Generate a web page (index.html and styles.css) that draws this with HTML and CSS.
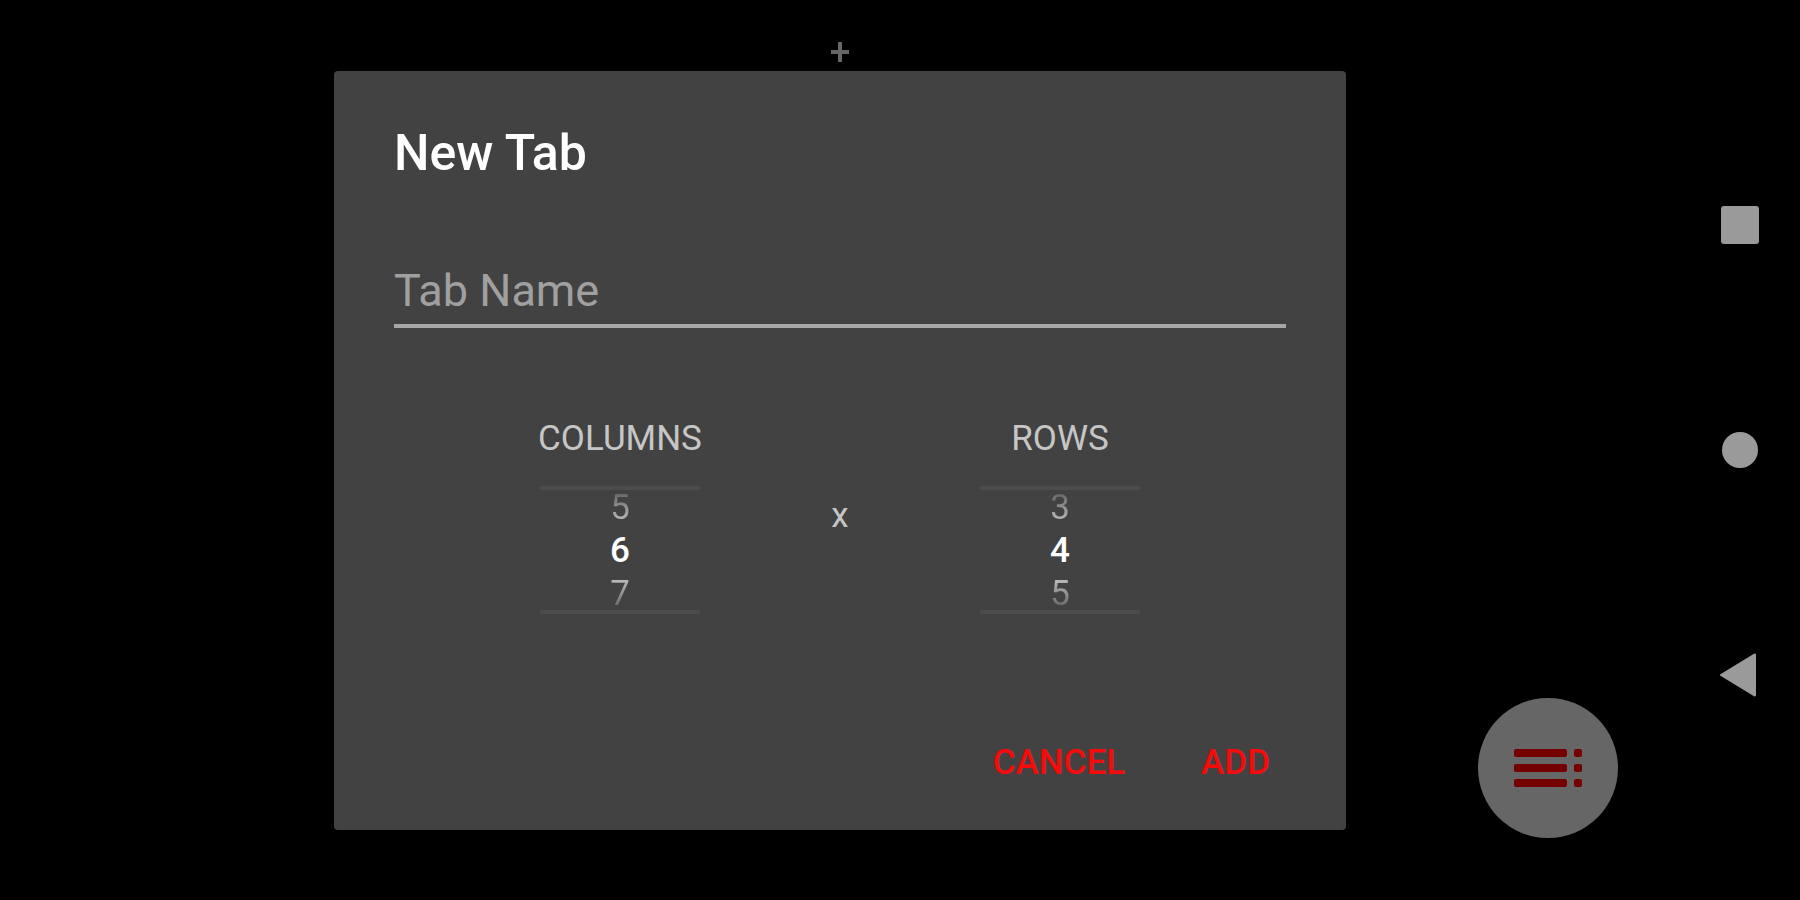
FILE: index.html
```html
<!DOCTYPE html>
<html lang="en">
<head>
    <meta charset="UTF-8">
    <meta name="viewport" content="width=device-width, initial-scale=1.0">
    <title>New Tab</title>
    <link rel="stylesheet" href="styles.css">
</head>
<body>
    <main class="app">
        <div class="tab-bar">
            <button class="add-tab" type="button" aria-label="Add tab">
                <svg width="20" height="20" viewBox="0 0 20 20"><path d="M10 0v20M1 10h18" stroke="#666" stroke-width="4"/></svg>
            </button>
        </div>

        <form class="dialog" role="dialog" aria-labelledby="dialog-title">
            <h1 class="dialog-title" id="dialog-title">New Tab</h1>
            <input class="tab-name" type="text" placeholder="Tab Name" aria-label="Tab Name">

            <div class="grid-size">
                <div class="picker" role="radiogroup" aria-labelledby="columns-label">
                    <div class="picker-label" id="columns-label">COLUMNS</div>
                    <div class="wheel">
                        <label class="value"><input type="radio" name="columns" value="5">5</label>
                        <label class="value"><input type="radio" name="columns" value="6" checked>6</label>
                        <label class="value"><input type="radio" name="columns" value="7">7</label>
                    </div>
                </div>
                <div class="times">x</div>
                <div class="picker" role="radiogroup" aria-labelledby="rows-label">
                    <div class="picker-label" id="rows-label">ROWS</div>
                    <div class="wheel">
                        <label class="value"><input type="radio" name="rows" value="3">3</label>
                        <label class="value"><input type="radio" name="rows" value="4" checked>4</label>
                        <label class="value"><input type="radio" name="rows" value="5">5</label>
                    </div>
                </div>
            </div>

            <div class="actions">
                <button class="action" type="button">CANCEL</button>
                <button class="action" type="button">ADD</button>
            </div>
        </form>

        <button class="fab" type="button" aria-label="Menu">
            <svg width="68" height="38" viewBox="0 0 68 38" fill="#750000">
                <rect x="0" y="0" width="53" height="8" rx="2"/>
                <rect x="0" y="15" width="53" height="8" rx="2"/>
                <rect x="0" y="30" width="53" height="8" rx="2"/>
                <rect x="60" y="0" width="8" height="8" rx="2"/>
                <rect x="60" y="15" width="8" height="8" rx="2"/>
                <rect x="60" y="30" width="8" height="8" rx="2"/>
            </svg>
        </button>
    </main>

    <!-- system navigation -->
    <nav class="nav-bar">
        <button class="nav-btn" type="button" aria-label="Recent apps">
            <svg width="40" height="44" viewBox="0 0 40 44"><rect x="1" y="3" width="38" height="38" rx="3"/></svg>
        </button>
        <button class="nav-btn" type="button" aria-label="Home">
            <svg width="40" height="44" viewBox="0 0 40 44"><circle cx="20" cy="22" r="18"/></svg>
        </button>
        <button class="nav-btn" type="button" aria-label="Back">
            <svg width="40" height="44" viewBox="0 0 40 44"><path d="M0 21.5 34 .7Q36 0 36 2v40q0 2-2 1.3L0 22.5Q-1 22 0 21.5z"/></svg>
        </button>
    </nav>
</body>
</html>
```
FILE: styles.css
```css
* {
    box-sizing: border-box;
}

body {
    display: flex;
    min-height: 100vh;
    margin: 0;
    background: #000;
    color: #fff;
    font-family: Roboto, sans-serif;
}

button {
    padding: 0;
    border: none;
    background: none;
    font-family: inherit;
    cursor: pointer;
}

svg {
    display: block;
}

.app {
    position: relative;
    flex: 1;
    display: flex;
    align-items: center;
    justify-content: center;
}

.tab-bar {
    position: absolute;
    top: 0;
    left: 0;
    right: 0;
    display: flex;
    justify-content: center;
    padding-top: 42px;
}

.dialog {
    position: relative;
    width: 90%;
    max-width: 1012px;
    padding: 53px 60px 47px;
    border-radius: 4px;
    background: #424242;
}

.dialog-title {
    margin: 0 0 82px;
    font-size: 50px;
    font-weight: 500;
    line-height: 58px;
}

.tab-name {
    display: block;
    width: 100%;
    height: 64px;
    margin-bottom: 90px;
    padding: 0 0 7px;
    border: none;
    border-bottom: 4px solid #a6a6a6;
    outline: none;
    background: none;
    color: #fff;
    font-family: inherit;
    font-size: 45px;
}

.tab-name::placeholder {
    color: #a0a0a0;
    opacity: 1;
}

.grid-size {
    display: grid;
    grid-template-columns: repeat(3, 220px);
    align-items: center;
    justify-content: center;
    margin-bottom: 128px;
    color: #c6c6c6;
    font-size: 35px;
    line-height: 41px;
    text-align: center;
}

.picker {
    display: flex;
    flex-direction: column;
    align-items: center;
    gap: 27px;
}

.wheel {
    display: flex;
    flex-direction: column;
    justify-content: center;
    width: 160px;
    height: 128px;
    padding-top: 2px;
    border-top: 4px solid #4c4c4c;
    border-bottom: 4px solid #4c4c4c;
    overflow: hidden;
}

.value {
    flex: none;
    line-height: 43px;
    cursor: pointer;
}

.value input {
    appearance: none;
    display: none;
}

/* outer values fade towards the edges of the wheel */
.value:first-child,
.value:last-child {
    background: linear-gradient(#6a6a6a 20%, #b8b8b8 80%);
    background-clip: text;
    color: transparent;
}

.value:last-child {
    background-image: linear-gradient(#b8b8b8 20%, #6a6a6a 80%);
}

.value:has(input:checked) {
    color: #fff;
    font-weight: 500;
}

.actions {
    display: flex;
    justify-content: flex-end;
    gap: 44px;
}

.action {
    padding: 0 16px;
    color: #f40c0c;
    font-size: 35px;
    font-weight: 500;
    line-height: 41px;
}

.fab {
    position: absolute;
    right: 62px;
    bottom: 62px;
    display: flex;
    align-items: center;
    justify-content: center;
    width: 140px;
    height: 140px;
    border-radius: 50%;
    background: #666;
}

.nav-bar {
    display: flex;
    flex-direction: column;
    align-items: center;
    justify-content: center;
    gap: 181px;
    width: 120px;
}

.nav-btn {
    fill: #9a9a9a;
}
```
